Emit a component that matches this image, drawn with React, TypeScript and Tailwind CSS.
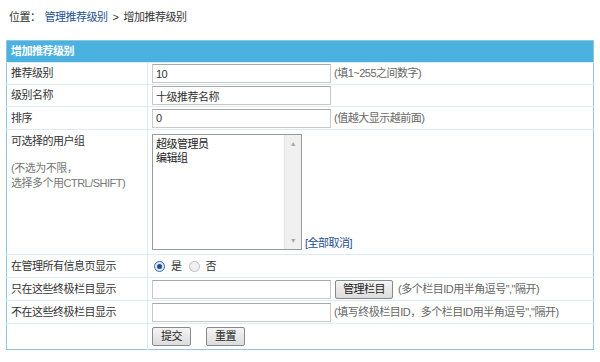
const font = { fontFamily: "'Liberation Sans', 'Noto Sans CJK SC', sans-serif" };

function Row({ label, children, h = "h-[22px]" }: { label: React.ReactNode; children: React.ReactNode; h?: string }) {
  return (
    <tr className={`${h} border-t border-[#d9ecf5]`}>
      <td className="w-[141px] pl-[4px] align-middle border-r border-[#d9ecf5] whitespace-nowrap">{label}</td>
      <td className="pl-[4px] align-middle whitespace-nowrap">{children}</td>
    </tr>
  );
}

const inputCls = "h-[19px] w-[179px] border border-[#c9c9c9] border-t-[#a8a8a8] bg-white px-[3px] text-[11px] tracking-[-0.5px] text-[#333] outline-none";
const btnCls = "h-[19px] px-0 whitespace-nowrap border border-[#8a8a8a] rounded-[2px] bg-gradient-to-b from-[#f4f4f4] to-[#dcdcdc] text-[11px] text-[#222] leading-none";

export default function App() {
  return (
    <div className="w-[600px] h-[362px] bg-white text-[11px] tracking-[-0.5px] text-[#333] pt-[8px]" style={font}>
      <div className="pl-[9px] h-[18px] leading-[18px]">
        位置：<span className="ml-[4px] text-[#1e4f8f]">管理推荐级别</span>
        <span className="mx-[5px]">&gt;</span>增加推荐级别
      </div>
      <table className="mt-[14px] ml-[6px] w-[588px] border border-[#8cc6df] border-collapse">
        <tbody>
          <tr className="h-[22px] bg-[#4bb2df]">
            <td colSpan={2} className="pl-[4px] text-white font-bold">增加推荐级别</td>
          </tr>
          <Row label="推荐级别">
            <div className="flex items-center">
              <input className={inputCls} defaultValue="10" />
              <span className="ml-[3px] text-[#666]">(填1~255之间数字)</span>
            </div>
          </Row>
          <Row label="级别名称">
            <input className={inputCls} defaultValue="十级推荐名称" />
          </Row>
          <Row label="排序" h="h-[23px]">
            <div className="flex items-center">
              <input className={inputCls} defaultValue="0" />
              <span className="ml-[3px] text-[#666]">(值越大显示越前面)</span>
            </div>
          </Row>
          <tr className="h-[125px] border-t border-[#d9ecf5]">
            <td className="w-[141px] pl-[4px] align-top pt-[4px] border-r border-[#d9ecf5] leading-[15px] whitespace-nowrap">
              <div>可选择的用户组</div>
              <div className="mt-[12px] text-[#777]">(不选为不限，</div>
              <div className="text-[#777]">选择多个用CTRL/SHIFT)</div>
            </td>
            <td className="pl-[4px] align-middle">
              <div className="flex items-end">
                <div className="w-[150px] h-[116px] border border-[#9a9a9a] flex bg-white">
                  <div className="flex-1 pl-[3px] pt-[2px] leading-[14px] text-[#222]">
                    <div>超级管理员</div>
                    <div>编辑组</div>
                  </div>
                  <div className="w-[17px] bg-[#f0f0f0] border-l border-[#e2e2e2] flex flex-col justify-between items-center py-[5px] text-[#a8a8a8] text-[7px] leading-none">
                    <span>▲</span>
                    <span>▼</span>
                  </div>
                </div>
                <span className="ml-[3px] text-[#1e4f8f] leading-[14px] whitespace-nowrap">[全部取消]</span>
              </div>
            </td>
          </tr>
          <Row label="在管理所有信息页显示" h="h-[23px]">
            <div className="flex items-center pl-[2px]">
              <span className="w-[11px] h-[11px] rounded-full border border-[#3b6fa8] bg-[#dbe7f5] flex items-center justify-center">
                <span className="w-[5px] h-[5px] rounded-full bg-[#1f4d8c]" />
              </span>
              <span className="ml-[6px]">是</span>
              <span className="ml-[7px] w-[11px] h-[11px] rounded-full border border-[#bcbcbc] bg-[#f0f0f0]" />
              <span className="ml-[6px]">否</span>
            </div>
          </Row>
          <Row label="只在这些终极栏目显示" h="h-[23px]">
            <div className="flex items-center">
              <input className={inputCls} />
              <button className={`${btnCls} ml-[4px] w-[58px]`}>管理栏目</button>
              <span className="ml-[5px] text-[#666]">(多个栏目ID用半角逗号","隔开)</span>
            </div>
          </Row>
          <Row label="不在这些终极栏目显示" h="h-[23px]">
            <div className="flex items-center">
              <input className={inputCls} />
              <span className="ml-[3px] text-[#666]">(填写终极栏目ID，多个栏目ID用半角逗号","隔开)</span>
            </div>
          </Row>
          <tr className="h-[26px] border-t border-[#d9ecf5]">
            <td className="w-[141px] border-r border-[#d9ecf5]" />
            <td className="pl-[4px] align-middle">
              <div className="flex items-center">
                <button className={`${btnCls} w-[39px]`}>提交</button>
                <button className={`${btnCls} w-[39px] ml-[15px]`}>重置</button>
              </div>
            </td>
          </tr>
        </tbody>
      </table>
    </div>
  );
}
